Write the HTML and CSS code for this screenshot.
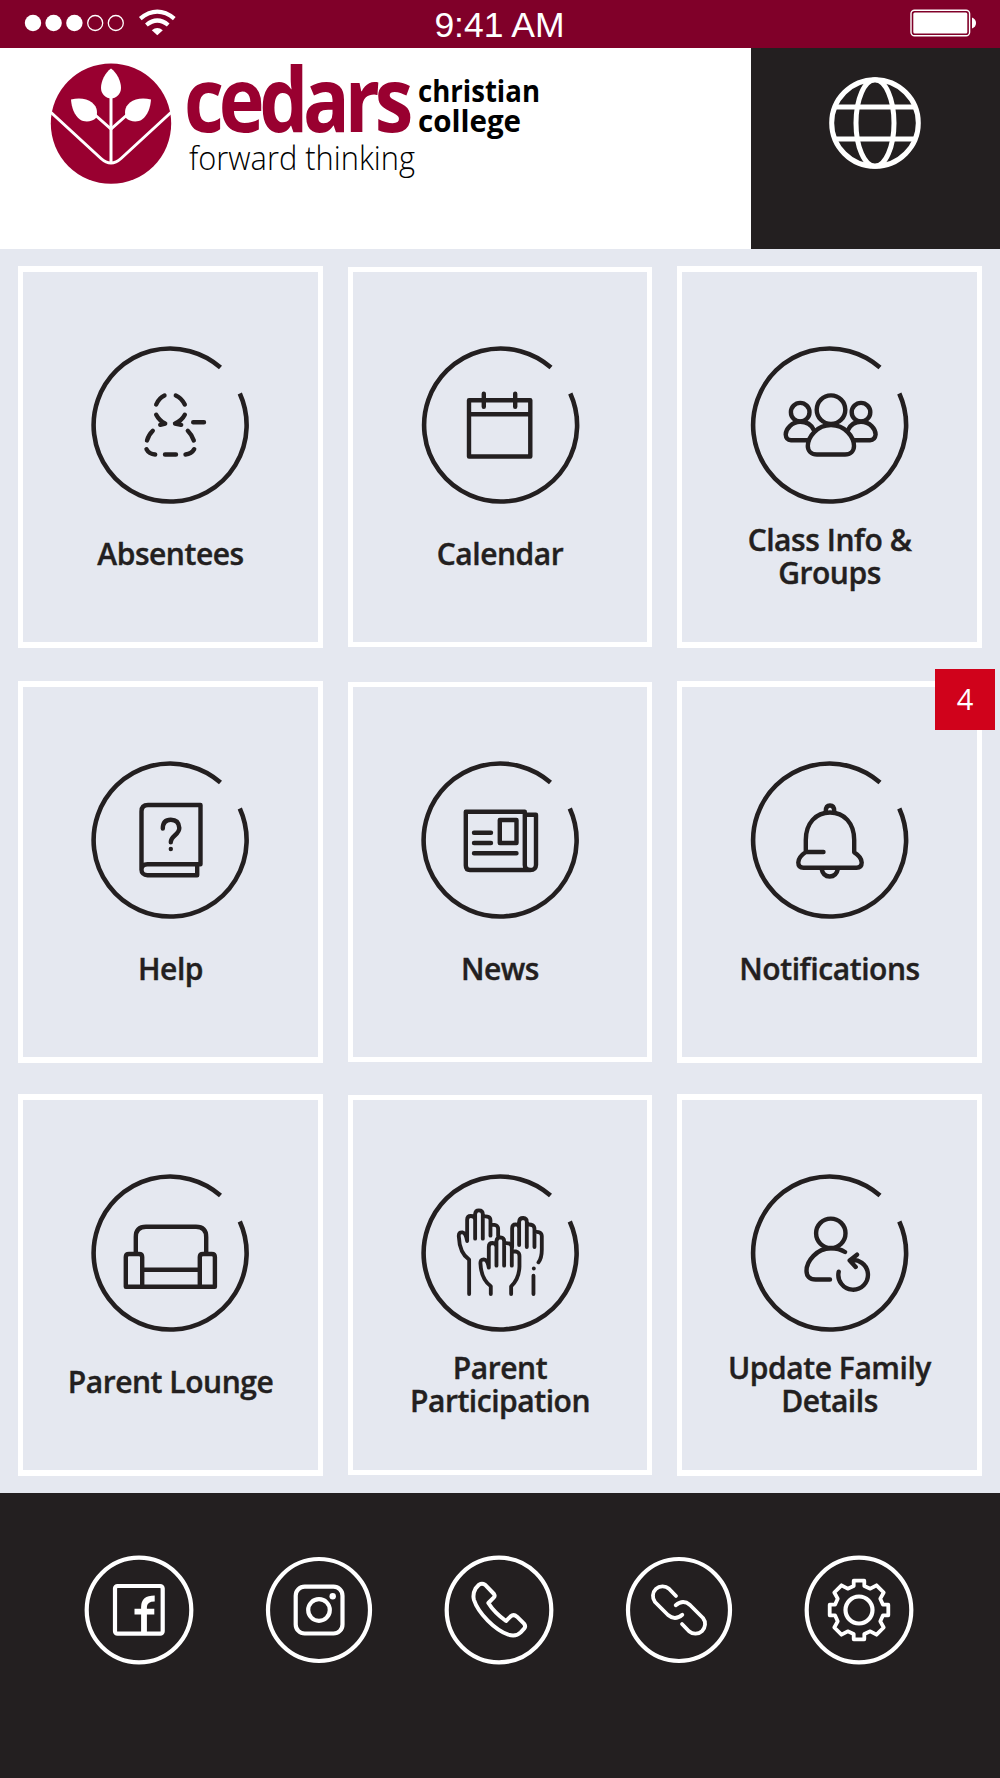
FILE: index.html
```html
<!DOCTYPE html>
<html lang="en">

<head>
  <meta charset="UTF-8">
  <meta name="viewport" content="width=device-width, initial-scale=1.0">
  <title>Cedars Christian College</title>
  <link rel="stylesheet" href="styles.css">
</head>

<body>
  <div class="status-bar">
    <svg class="signal" width="160" height="48" viewBox="20 0 160 48">
      <g fill="#fff">
        <circle cx="33" cy="23" r="8.2" />
        <circle cx="53.6" cy="23" r="8.2" />
        <circle cx="74.4" cy="23" r="8.2" />
      </g>
      <g fill="none" stroke="#fff" stroke-width="1.3">
        <circle cx="95.2" cy="23" r="7.5" />
        <circle cx="115.8" cy="23" r="7.5" />
      </g>
      <g fill="none" stroke="#fff" stroke-width="4.2">
        <path d="M140.3 18.6Q157.3 4.8 174.3 18.6" />
        <path d="M146.4 25Q157.3 16 168.2 25" />
      </g>
      <path d="M151.8 30.3Q157.3 25.6 162.8 30.3L157.3 35.2Z" fill="#fff" />
    </svg>
    <span class="time">9:41 AM</span>
    <svg class="battery" width="80" height="48" viewBox="905 0 80 48">
      <rect x="911" y="10.3" width="58.6" height="25.4" rx="3.5" fill="none" stroke="#fff" stroke-width="1.4" />
      <rect x="913.3" y="12.5" width="54" height="21" rx="1.5" fill="#fff" />
      <path d="M972 17.5Q976 19 976 23T972 28.5Z" fill="#fff" />
    </svg>
  </div>

  <header class="header">
    <div class="logo">
      <svg width="560" height="200" viewBox="0 49 560 200">
        <circle cx="111" cy="123.6" r="60.2" fill="#990030" />
        <g fill="none" stroke="#fff" stroke-width="3">
          <path d="M50 111.5L101 158.5Q111 167.5 121 158.5L172 111.5" />
          <path d="M111 96V163" />
          <path d="M94 114L111 129L128 114" />
        </g>
        <g fill="#fff">
          <path d="M111 68.5C117 73 121 81 121 88C121 94 116 98.5 111 98.5C106 98.5 101 94 101 88C101 81 105 73 111 68.5Z" />
          <path d="M71 99.5C79 97.5 87 98.5 92 102.5C98 107.5 97.5 113 96 118C92.5 121.5 85 123 80 119.5C74 115 71.5 107 71 99.5Z" />
          <path d="M151 99.5C143 97.5 135 98.5 130 102.5C124 107.5 124.5 113 126 118C129.5 121.5 137 123 142 119.5C148 115 150.5 107 151 99.5Z" />
        </g>
        <text class="brand" x="184" y="132.3" textLength="224" lengthAdjust="spacingAndGlyphs">cedars</text>
        <text class="brand-sub" x="418" y="101.7" textLength="122" lengthAdjust="spacingAndGlyphs">christian</text>
        <text class="brand-sub" x="418" y="131.7" textLength="103" lengthAdjust="spacingAndGlyphs">college</text>
        <text class="tagline" x="189" y="170" textLength="226" lengthAdjust="spacingAndGlyphs">forward thinking</text>
      </svg>
    </div>
    <a class="globe" href="#">
      <svg width="94" height="94" viewBox="-47 -47 94 94">
        <circle r="43.3" />
        <ellipse rx="19" ry="43.3" />
        <path d="M-40 -16H40M-40 16H40" />
      </svg>
    </a>
  </header>

  <!-- shared open ring round every tile icon -->
  <svg class="defs">
    <symbol id="ring" viewBox="-80 -80 160 160">
      <path d="M50.5 -57.5A76.5 76.5 0 1 0 69.8 -31.5" fill="none" stroke="#231f20" stroke-width="4.6" />
    </symbol>
  </svg>

  <main class="tiles">
    <a class="tile left" href="#">
      <svg class="icon" viewBox="-80 -80 160 160">
        <use href="#ring" x="-80" y="-80" width="160" height="160" />
        <path d="M-5.5 -29.5Q-11 -27 -13.8 -20.5M5.8 -29.5Q11.5 -27 14.8 -20.5M-13.8 -10.2Q-10.5 -4 -4.8 -1.5L-9.8 -.2M14.8 -10.2Q11.5 -4 5 -1.5L11.2 -.2" />
        <path d="M-17.2 5.8Q-21.5 10 -23 15.5M17.8 5.8Q22 10 23.8 15.5M-23.5 24.2Q-21 29 -14.8 29.5M24.2 24.2Q21.5 29 15.5 29.5M-5 29.5H6M23.2 -2.8H34" />
      </svg>
      <span class="label">Absentees</span>
    </a>
    <a class="tile middle" href="#">
      <svg class="icon" viewBox="-80 -80 160 160">
        <use href="#ring" x="-79.5" y="-80" width="160" height="160" />
        <path d="M-31 -24.8H30.3V31.5H-31ZM-31 -10.8H30.3M-16.2 -31.3V-18.3M15.2 -31.3V-18.3" />
      </svg>
      <span class="label">Calendar</span>
    </a>
    <a class="tile" href="#">
      <svg class="icon" viewBox="-80 -80 160 160">
        <use href="#ring" x="-80.5" y="-80" width="160" height="160" />
        <circle cx="1" cy="-15.3" r="14.3" />
        <path d="M1 0C-13 0 -22 12 -22.2 21C-22.2 26 -18.5 29.5 -13 29.5H15C20.500 29.500 24 26 24 21C24 12 15 0 1 0Z" />
        <circle cx="-29.8" cy="-12.8" r="9.3" />
        <circle cx="31" cy="-12.8" r="9.3" />
        <path d="M-16.200 5Q-20 -3.200 -29.800 -3.200C-38 -3.200 -44.300 4 -44.300 9.500Q-44 15 -39 15.200H-22" />
        <path d="M18 5Q22 -3.200 31 -3.200C40 -3.200 45.600 4 45.600 9.500Q45 15 40 15.200H24" />
      </svg>
      <span class="label two-lines">Class Info &amp;<br>Groups</span>
    </a>

    <a class="tile left" href="#">
      <svg class="icon" viewBox="-80 -80 160 160">
        <use href="#ring" x="-80" y="-80" width="160" height="160" />
        <path d="M-28.5 30V-28.5Q-28.5 -35 -22 -35H30.5V24.3H-22.5C-30.5 24.3 -30.5 35.3 -22.5 35.3H27.2V25" />
        <path d="M-7.2 -11.5Q-7.2 -20.3 .8 -20.3T9.3 -12C9.3 -5 .8 -4.5 .8 2.3" />
        <circle class="dot" cx=".8" cy="9" r="2.2" />
      </svg>
      <span class="label">Help</span>
    </a>
    <a class="tile middle" href="#">
      <svg class="icon" viewBox="-80 -80 160 160">
        <use href="#ring" x="-80" y="-80" width="160" height="160" />
        <path d="M-34.2 -28.3H24.8V25Q24.8 30 30.3 30T36 25V-25.3H25M30.3 30H-30Q-34.2 30 -34.2 25.5V-28.3" />
        <path d="M-.2 -20H16.5V3H-.2ZM-26 -7.3H-9M-26 3H-9M-26 13.3H16.5" />
      </svg>
      <span class="label">News</span>
    </a>
    <a class="tile" href="#">
      <span class="badge">4</span>
      <svg class="icon" viewBox="-80 -80 160 160">
        <use href="#ring" x="-80.5" y="-80" width="160" height="160" />
        <path d="M-4.3 -28.5Q-4.3 -34.5 0 -34.5T4.3 -28.5" />
        <path d="M-6.5 12H-24.2V0C-24.2 -17 -14 -27.5 0 -27.5S24.2 -17 24.2 0V12.3Q31.7 17 31.7 22.5Q31.7 27.7 26.5 27.7H-26.5Q-31.7 27.7 -31.7 22.5Q-31.7 17 -24.2 12" />
        <path d="M-8.5 28.5Q-7 36.5 -.3 36.5T8 28.5" />
      </svg>
      <span class="label">Notifications</span>
    </a>

    <a class="tile left" href="#">
      <svg class="icon" viewBox="-80 -80 160 160">
        <use href="#ring" x="-80" y="-80" width="160" height="160" />
        <path d="M-34.2 .5V-16Q-34.2 -26.3 -24 -26.3H26Q36.2 -26.3 36.2 -16V.5" />
        <path d="M-44.2 33.7V4Q-44.2 1 -41 1H-31Q-27.8 1 -27.8 4V33.7M29.8 33.7V4Q29.8 1 33 1H41.7Q44.9 1 44.9 4V33.7M-44.2 33.7H44.9M-27.8 16.7H29.8" />
      </svg>
      <span class="label">Parent Lounge</span>
    </a>
    <a class="tile middle" href="#">
      <svg class="icon" viewBox="-80 -80 160 160">
        <use href="#ring" x="-80" y="-80" width="160" height="160" />
        <g transform="scale(.3333) translate(-255.6 -250)" stroke-width="11.5">
          <path d="M163 373V270Q134 250 132 200Q131 187 143 188Q153 190 157 214V150Q157 139 168 139Q181 139 181 150V207V133Q182 122 192 122Q204 122 204 133V207V141Q227 137 227 152V198V165Q250 163 250 178V198" />
          <path d="M228 373V350Q199 328 197 282Q196 269 207 269Q218 270 222 294V232Q222 220 233 220Q245 221 245 232V288V214Q246 203 257 203Q268 204 268 214V288V221Q291 218 291 234V288V245Q314 243 314 259V290Q313 328 289 350V373" />
          <path d="M292 232V176Q292 164 303 164Q313 165 313 176V226V156Q314 145 325 145Q336 146 336 156V232V165Q359 162 359 178V232V187Q381 184 381 200V240Q381 265 371 278M356 318V373" />
          <path d="M357 296V296.5" />
        </g>
      </svg>
      <span class="label two-lines">Parent<br>Participation</span>
    </a>
    <a class="tile" href="#">
      <svg class="icon" viewBox="-80 -80 160 160">
        <use href="#ring" x="-80.5" y="-80" width="160" height="160" />
        <circle cx=".8" cy="-19.7" r="14.7" />
        <path d="M15 -1Q9 -4.7 .8 -4.7C-13 -4.7 -23.5 8 -23.5 18Q-23.3 26.3 -14.3 26.5H0" />
        <path d="M8.7 18.7A14.8 14.8 0 1 0 19.7 7.5M27 1.700L19.700 7.500L25.700 14" />
      </svg>
      <span class="label two-lines">Update Family<br>Details</span>
    </a>
  </main>

  <footer class="footer">
    <svg class="social" viewBox="-55 -55 110 110">
      <circle r="52.3" />
      <rect x="-24" y="-24" width="47.7" height="47.7" rx="2.5" />
      <path d="M5 22V-3Q5 -11.5 15.7 -11.5M-4.5 1.7H15.3" stroke-width="5.8" stroke-linecap="butt" />
    </svg>
    <svg class="social" viewBox="-55 -55 110 110">
      <circle r="51" />
      <rect x="-23.3" y="-23.3" width="46.8" height="46.8" rx="9" />
      <circle r="10.8" />
      <circle cx="13.7" cy="-13.7" r="3.2" fill="#fff" stroke="none" />
    </svg>
    <svg class="social" viewBox="-55 -55 110 110">
      <circle r="52.3" />
      <path transform="scale(.3333) translate(-192 -195)" stroke-width="12" d="M150 119L177 147Q181 153 176 158L160 174C175 198 195 215 213 228L227 214Q236 206 246 215L267 236Q273 243 268 250L257 262Q243 276 220 269C180 255 130 205 117 165Q112 148 122 130L132 119Q141 114 150 119Z" />
    </svg>
    <svg class="social" viewBox="-55 -55 110 110">
      <circle r="51" />
      <path d="M-3 -14L-10 -21.3A9.7 9.7 0 0 0 -24 -8L-11 5Q-4 11 3.3 4.7M3 14L10 21.3A9.7 9.7 0 0 0 24 8L11 -5Q4 -11 -3.3 -4.7" stroke-width="3.8" />
    </svg>
    <svg class="social" viewBox="-55 -55 110 110">
      <circle r="52.3" />
      <circle r="13.5" />
      <path d="M-5.3 -24V-29.3H5.3V-24L11.3 -21.3L17.5 -24.7L24.7 -17.5L21.3 -11.3L24 -5.3H29.3V5.3H24L21.3 11.3L24.7 17.5L17.5 24.7L11.3 21.3L5.3 24V29.3H-5.3V24L-11.3 21.3L-17.5 24.7L-24.7 17.5L-21.3 11.3L-24 5.3H-29.3V-5.3H-24L-21.3 -11.3L-24.7 -17.5L-17.5 -24.7L-11.3 -21.3Z" stroke-width="3.8" />
    </svg>
  </footer>
</body>

</html>
```
FILE: styles.css
```css
* {
  box-sizing: border-box;
}

body {
  margin: 0;
  width: 1000px;
  height: 1778px;
  display: flex;
  flex-direction: column;
  font-family: "Open Sans", "Noto Sans", sans-serif;
  color: #231f20;
  background-color: #231f20;
}

a {
  color: inherit;
  text-decoration: none;
}

svg {
  display: block;
}

.defs {
  display: none;
}

/* status bar */
.status-bar {
  height: 48px;
  display: grid;
  grid-template-columns: 1fr auto 1fr;
  padding: 0 15px 0 20px;
  background-color: #800029;
}

.time {
  margin-right: 6px;
  font-family: "Liberation Sans", Arial, sans-serif;
  font-size: 35.5px;
  line-height: 50px;
  color: #fff;
}

.battery {
  justify-self: end;
}

/* header */
.header {
  display: flex;
  height: 201px;
}

.logo {
  width: 751px;
  padding-top: 1px;
  background-color: #fff;
}

.logo svg {
  overflow: visible;
}

.brand {
  font-size: 89px;
  font-weight: 700;
  letter-spacing: -6px;
  fill: #990030;
}

.brand-sub {
  font-size: 31px;
  font-weight: 700;
}

.tagline {
  font-size: 33px;
  font-weight: 300;
}

.globe {
  flex: 1;
  display: flex;
  justify-content: center;
  padding: 28px 1px 0 0;
  background-color: #231f20;
}

.globe svg {
  fill: none;
  stroke: #fff;
  stroke-width: 5;
}

/* tiles */
.tiles {
  height: 1244px;
  padding: 17px 18px;
  display: grid;
  grid-template-columns: 305px 304px 305px;
  grid-template-rows: 384px 382px 382px;
  column-gap: 25px;
  row-gap: 31px;
  background-color: #e5e8f0;
}

.tile {
  position: relative;
  height: 382px;
  padding-top: 73px;
  display: flex;
  flex-direction: column;
  align-items: center;
  border: solid #fff;
  border-width: 6px 5px;
}

.left .icon {
  margin-right: 1px;
}

.middle {
  height: 380px;
  margin-top: 1px;
  border-width: 5px;
}

.icon {
  width: 160px;
  height: 160px;
  fill: none;
  stroke: #231f20;
  stroke-width: 4.4;
  stroke-linecap: round;
  stroke-linejoin: round;
}

.icon use {
  stroke-linecap: butt;
}

.icon .dot {
  fill: #231f20;
  stroke: none;
}

.label {
  height: 65px;
  margin-top: 17px;
  display: grid;
  align-content: center;
  text-align: center;
  font-size: 30px;
  font-weight: 600;
  line-height: 32.5px;
  letter-spacing: -0.45px;
  font-feature-settings: "liga";
  -webkit-text-stroke: 0.4px #231f20;
  white-space: nowrap;
}

.two-lines {
  margin-top: 19px;
}

.badge {
  position: absolute;
  top: -18px;
  right: -18px;
  width: 60px;
  height: 61px;
  line-height: 60px;
  text-align: center;
  font-size: 29px;
  color: #fff;
  background-color: #d0021b;
}

/* footer */
.footer {
  flex: 1;
  display: flex;
  justify-content: center;
  gap: 70px;
  padding: 62px 3px 0 0;
  background-color: #231f20;
}

.social {
  width: 110px;
  height: 110px;
  fill: none;
  stroke: #fff;
  stroke-width: 4.2;
  stroke-linecap: round;
  stroke-linejoin: round;
}
```
